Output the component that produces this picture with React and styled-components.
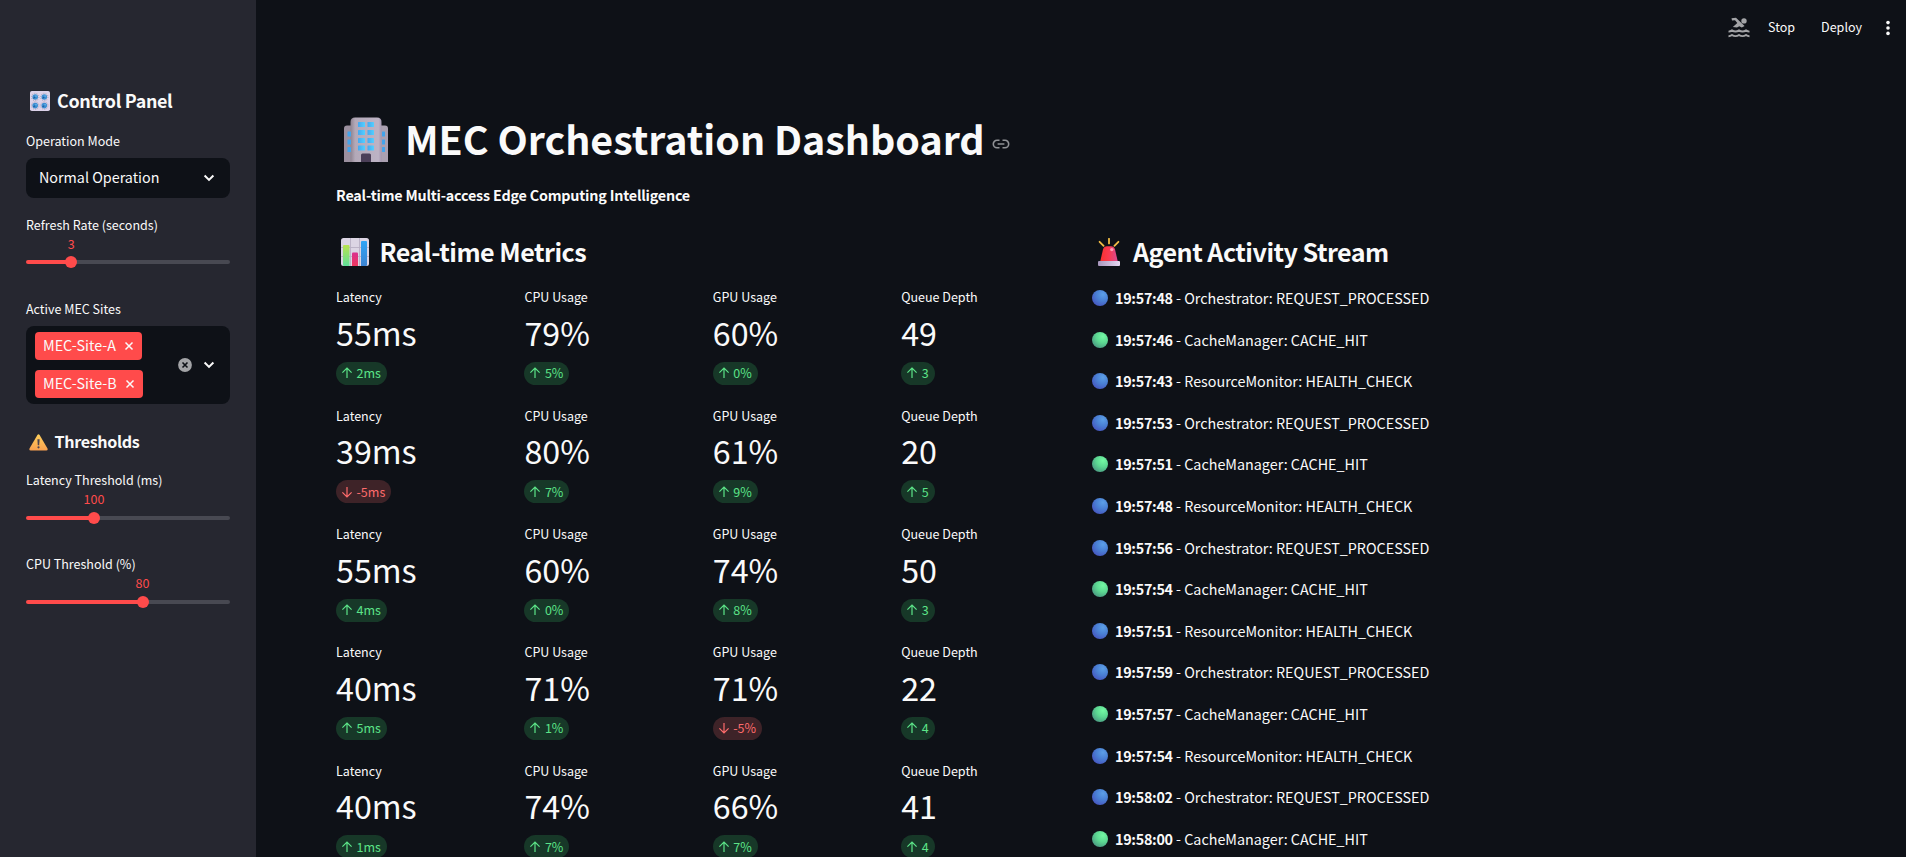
import React from "react";
import styled, { createGlobalStyle } from "styled-components";

const GlobalStyle = createGlobalStyle`
  *, *::before, *::after { box-sizing: border-box; }
  body {
    margin: 0;
    background: #0e1117;
    color: #fafafa;
    font-family: "Noto Sans CJK SC", "Noto Sans", sans-serif;
    font-size: 14.33px;
    overflow: hidden;
  }
  h1, h2, h3, p { margin: 0; }
`;

const Shell = styled.div`
  display: flex;
  height: 857px;
  overflow: hidden;
`;

/* ---------- sidebar ---------- */

const Sidebar = styled.aside`
  flex: 0 0 256px;
  padding: 86px 26px 0;
  background: #262730;
`;

const SideHeading = styled.h2`
  display: flex;
  align-items: center;
  height: 30px;
  gap: ${(p) => p.$gap}px;
  padding-left: ${(p) => p.$indent}px;
  padding-bottom: 2px;
  font-size: ${(p) => (p.$small ? 16.1 : 17.9)}px;
  font-weight: 600;
  line-height: 28px;
  letter-spacing: -0.33px;
  white-space: nowrap;
  svg { margin-top: 2px; }
`;

const Field = styled.div`
  display: flex;
  flex-direction: column;
  margin-top: ${(p) => p.$top}px;
`;

const FieldLabel = styled.label`
  height: 22px;
  font-size: 12.53px;
  line-height: ${(p) => (p.$raised ? 20 : 22)}px;
  white-space: nowrap;
`;

const SelectBox = styled.div`
  display: flex;
  align-items: center;
  justify-content: space-between;
  height: 40px;
  margin-top: 6px;
  padding: 0 13px 0 13.5px;
  border-radius: 8px;
  background: #0e1117;
`;

const SelectText = styled.span`
  margin: 0 0 2px -0.5px;
  line-height: 24px;
`;

const MultiBox = styled(SelectBox)`
  height: 78px;
  padding: 0 13px 0 9px;
`;

const TagList = styled.div`
  display: flex;
  flex-direction: column;
  align-items: flex-start;
  gap: 10px;
`;

const Tag = styled.span`
  display: flex;
  justify-content: space-between;
  width: ${(p) => p.$width}px;
  height: 28px;
  padding: 0 8px;
  border-radius: 4px;
  background: #ff4b4b;
  line-height: 26px;
  svg { margin-top: 9px; }
`;

const BoxActions = styled.div`
  display: flex;
  align-items: center;
  gap: 9px;
`;

const SliderValue = styled.div`
  width: 40px;
  height: 18px;
  margin-left: ${(p) => p.$at - 20}px;
  color: #ff4b4b;
  font-size: 12.53px;
  line-height: ${(p) => (p.$raised ? 14 : 16)}px;
  text-align: center;
`;

const SliderRail = styled.div`
  display: flex;
  align-items: center;
  height: 12px;
  margin-top: 2px;
`;

const RailFilled = styled.div`
  width: ${(p) => p.$at}px;
  height: 4px;
  border-radius: 2px 0 0 2px;
  background: #ff4b4b;
`;

const RailRest = styled.div`
  flex: 1;
  height: 4px;
  border-radius: 0 2px 2px 0;
  background: #484952;
`;

const Thumb = styled.div`
  flex: 0 0 12px;
  height: 12px;
  margin: 0 -6px;
  z-index: 1;
  border-radius: 50%;
  background: #ff4b4b;
`;

/* ---------- main ---------- */

const Main = styled.main`
  flex: 1;
  min-width: 0;
`;

const Toolbar = styled.header`
  display: flex;
  align-items: center;
  justify-content: flex-end;
  height: 60px;
  padding: 0 13px 4px 0;
`;

const ToolbarButton = styled.button`
  margin: 0 0 2px ${(p) => p.$left}px;
  padding: 0;
  border: 0;
  background: none;
  color: #fafafa;
  font-family: inherit;
  font-size: 12.53px;
  line-height: 22px;
`;

const ToolbarIcon = styled.span`
  display: flex;
  margin-left: ${(p) => p.$left || 0}px;
`;

const Content = styled.div`
  padding-left: 80px;
`;

const TitleRow = styled.div`
  display: flex;
  align-items: center;
  height: 60px;
  margin-top: 50px;
  padding-left: 7px;
`;

const Title = styled.h1`
  margin: 0 0 4px 16px;
  font-size: 39.4px;
  font-weight: 700;
  line-height: 56px;
  letter-spacing: -0.03px;
  white-space: nowrap;
`;

const LinkSlot = styled.span`
  display: flex;
  margin: 7px 0 0 7px;
`;

const Subtitle = styled.p`
  height: 26px;
  margin-top: 13px;
  font-weight: 700;
  line-height: 24px;
  letter-spacing: -0.195px;
`;

const Columns = styled.div`
  display: grid;
  grid-template-columns: 756px 1fr;
  margin-top: 26px;
`;

const SectionHeading = styled.h2`
  display: flex;
  align-items: center;
  gap: ${(p) => p.$gap}px;
  height: 36px;
  padding-left: ${(p) => p.$indent}px;
  padding-bottom: 4px;
  font-size: 25.07px;
  font-weight: 600;
  line-height: 32px;
  letter-spacing: -0.51px;
  white-space: nowrap;
  svg { margin-top: 2px; }
`;

const MetricGrid = styled.div`
  display: grid;
  grid-template-columns: repeat(4, 188.4px);
  grid-auto-rows: 118.3px;
  margin-top: 15.4px;
`;

const MetricLabel = styled.div`
  height: 21.6px;
  font-size: 12.53px;
  line-height: 22px;
`;

const MetricValue = styled.div`
  height: 54px;
  font-size: 32.23px;
  line-height: 49.6px;
`;

const Delta = styled.div`
  display: flex;
  align-items: center;
  width: fit-content;
  height: 23px;
  padding: 0 6px 1px 3px;
  border-radius: 12px;
  background: ${(p) => (p.$down ? "#3e2328" : "#173828")};
  color: ${(p) => (p.$down ? "#ff6c6c" : "#5ce488")};
  font-size: 12.53px;
  line-height: 21px;
  svg { margin: 1px 1.5px 0 0; }
`;

const Feed = styled.div`
  display: flex;
  flex-direction: column;
  margin-top: 15px;
`;

const FeedRow = styled.p`
  display: flex;
  height: 41.6px;
  line-height: 23.6px;
  white-space: pre;
  svg { margin: 4px 7px 0 0; }
`;

const FeedTime = styled.strong`
  letter-spacing: -0.28px;
`;

/* ---------- icons ---------- */

const KnobsIcon = () => (
  <svg width="20" height="20" viewBox="0 0 20 20">
    <rect width="20" height="20" rx="1.8" fill="#ddd3ea" />
    {[[5.2, 6], [14.3, 6], [5.2, 14.6], [14.3, 14.6]].map(([x, y]) => (
      <g key={`${x}-${y}`}>
        <circle cx={x} cy={y} r="3.7" fill="none" stroke="#a79db3" strokeWidth="1" strokeDasharray="1 1.3" />
        <circle cx={x} cy={y} r="2.8" fill="#3e8fd2" />
        <path d={`M${x} ${y}l-1.8 1.4`} stroke="#1d5c9e" strokeWidth="1.1" />
        <circle cx={x + 0.8} cy={y - 0.9} r="0.8" fill="#6db9ef" />
      </g>
    ))}
  </svg>
);

const WarningIcon = () => (
  <svg width="19" height="17" viewBox="0 0 19 17">
    <defs>
      <linearGradient id="warn" x1="0" y1="0" x2="0" y2="1">
        <stop offset="0" stopColor="#ffd05c" />
        <stop offset="1" stopColor="#f9a04f" />
      </linearGradient>
    </defs>
    <path d="M8.4 1.1Q9.5-.4 10.6 1.1L18.5 14.6Q19.1 16.4 17.3 16.5H1.7Q-.1 16.4.5 14.6Z" fill="url(#warn)" />
    <path d="M8.4 5.2h2.2l-.4 6H8.8Z" fill="#4d4450" />
    <circle cx="9.5" cy="13.3" r="1.1" fill="#4d4450" />
  </svg>
);

const BuildingIcon = () => (
  <svg width="46" height="46" viewBox="0 0 46 46">
    <defs>
      <linearGradient id="tower" x1="0" x2="1">
        <stop offset="0" stopColor="#8e8390" />
        <stop offset=".15" stopColor="#b3a9b8" />
        <stop offset=".9" stopColor="#bdb3c5" />
        <stop offset="1" stopColor="#a497b0" />
      </linearGradient>
      <linearGradient id="pane" x1="0" x2="1">
        <stop offset="0" stopColor="#45a8f0" />
        <stop offset="1" stopColor="#52d0ff" />
      </linearGradient>
    </defs>
    <path d="M1 45V11.5q0-3 3-3h5V45Z" fill="#9b909f" />
    <path d="M45 45V11.5q0-3-3-3h-5V45Z" fill="#aaa0b1" />
    <path d="M7.5 45V5q0-4.500 4.500-4.500h22q4.500 0 4.500 4.500v40Z" fill="url(#tower)" />
    {[5, 13, 21, 28.5].map((y) => (
      <g key={y} fill="url(#pane)">
        <rect x="15" y={y} width="7" height="5" rx=".6" />
        <rect x="24.5" y={y} width="6.5" height="5" rx=".6" />
      </g>
    ))}
    {[14.5, 22.5, 30].map((y) => (
      <g key={y} fill="#43a4ec">
        <rect x="4.5" y={y} width="3.5" height="5" rx=".5" />
        <rect x="39" y={y} width="3" height="5" rx=".5" />
      </g>
    ))}
    <path d="M18 45v-7q0-1.500 1.500-1.500h7q1.500 0 1.500 1.500v7Z" fill="#4b3f58" />
  </svg>
);

const ChartIcon = () => (
  <svg width="28" height="28" viewBox="0 0 28 28">
    <defs>
      <linearGradient id="barGreen" x1="0" y1="0" x2="0" y2="1">
        <stop offset="0" stopColor="#b9e24f" />
        <stop offset="1" stopColor="#5fe09a" />
      </linearGradient>
      <linearGradient id="barBlue" x1="0" y1="0" x2="0" y2="1">
        <stop offset="0" stopColor="#2fa4f5" />
        <stop offset="1" stopColor="#3d84d2" />
      </linearGradient>
      <linearGradient id="barPink" x1="0" y1="0" x2="0" y2="1">
        <stop offset="0" stopColor="#d9308f" />
        <stop offset="1" stopColor="#f0385f" />
      </linearGradient>
    </defs>
    <rect width="28" height="28" rx="2.5" fill="#dcd5e4" />
    <path d="M0 9.5h28M0 18.5h28M9.5 0v28M18.5 0v28" stroke="#b9b0c4" strokeWidth=".9" />
    <path d="M2 8q0-1 1-1h4.500q1 0 1 1v20H3q-1 0-1-1Z" fill="url(#barGreen)" />
    <path d="M11 15.5q0-1 1-1h4q1 0 1 1V28h-6Z" fill="url(#barPink)" />
    <path d="M20 4q0-1 1-1h4q1 0 1 1v23q0 1-1 1h-5Z" fill="url(#barBlue)" />
  </svg>
);

const SirenIcon = () => (
  <svg width="22" height="28" viewBox="0 0 22 28">
    <defs>
      <linearGradient id="lamp" x1="0" x2="1">
        <stop offset="0" stopColor="#f8312f" />
        <stop offset=".5" stopColor="#fb3a50" />
        <stop offset="1" stopColor="#d94a93" />
      </linearGradient>
      <linearGradient id="lampBase" x1="0" y1="0" x2="1" y2="0">
        <stop offset="0" stopColor="#a796bd" />
        <stop offset="1" stopColor="#e6d9f2" />
      </linearGradient>
    </defs>
    <path d="M11 .8v4.600M1.600 3.800l4 4M20.400 3.800l-4 4" stroke="#f2bd45" strokeWidth="1.8" strokeLinecap="round" />
    <path d="M2.200 23.500L5 11.500Q6 8.200 9 8.200h4q3 0 4 3.300l2.800 12Z" fill="url(#lamp)" />
    <circle cx="13.8" cy="11.6" r="1.7" fill="#ff9db4" />
    <rect x="0" y="23" width="22" height="5" rx="1" fill="url(#lampBase)" />
  </svg>
);

const DOT_STOPS = {
  blue: ["#5c9fe6", "#4a80d4", "#4656c0"],
  green: ["#74f8a4", "#5cd892", "#4a9a82"],
};

const Dot = ({ tone }) => (
  <svg width="16" height="16" viewBox="0 0 16 16">
    <defs>
      <radialGradient id={`dot-${tone}`} cx=".68" cy=".28" r=".8">
        <stop offset="0" stopColor={DOT_STOPS[tone][0]} />
        <stop offset=".5" stopColor={DOT_STOPS[tone][1]} />
        <stop offset="1" stopColor={DOT_STOPS[tone][2]} />
      </radialGradient>
    </defs>
    <circle cx="8" cy="8" r="8" fill={`url(#dot-${tone})`} />
  </svg>
);

const ChevronIcon = () => (
  <svg width="16" height="16" viewBox="0 0 16 16" fill="none" stroke="#fafafa" strokeWidth="2">
    <path d="M3.600 5.500L8 9.900l4.400-4.400" />
  </svg>
);

const CrossIcon = () => (
  <svg width="10" height="10" viewBox="0 0 10 10" fill="none" stroke="#fafafa" strokeWidth="1.5">
    <path d="M1.500 1.500l7 7M8.500 1.500l-7 7" />
  </svg>
);

const ClearIcon = () => (
  <svg width="14" height="14" viewBox="0 0 14 14">
    <circle cx="7" cy="7" r="6.9" fill="#a3a4a7" />
    <path d="M4.500 4.500l5 5M9.500 4.500l-5 5" stroke="#0e1117" strokeWidth="1.6" />
  </svg>
);

const LinkIcon = () => (
  <svg width="18" height="10" viewBox="0 0 18 10" fill="none" stroke="#8f9195" strokeWidth="1.6">
    <path d="M7.500 1.300H5a3.700 3.700 0 0 0 0 7.400h2.500M10.500 1.300H13a3.700 3.700 0 0 1 0 7.400h-2.500M5.600 5h6.800" />
  </svg>
);

const SwimIcon = () => (
  <svg width="22" height="22" viewBox="0 0 22 22" fill="#a3a4a7">
    <circle cx="16" cy="3.9" r="2.7" />
    <path d="M3.500 1.200L8 .700l8.600 8.300-2.800 1.500-2.500-1.200L9 10.500l-4.200-.6 4.500-4L7 3.300l-3 .3Z" />
    <path d="M.5 14.600q1.800 0 3.500-1.200 3.500 2.300 7 0 3.500 2.300 7 0 1.700 1.200 3.500 1.200M.5 19.200q1.800 0 3.500-1.200 3.500 2.300 7 0 3.500 2.300 7 0 1.700 1.200 3.500 1.200" fill="none" stroke="#a3a4a7" strokeWidth="1.9" />
  </svg>
);

const MenuDots = () => (
  <svg width="10" height="16" viewBox="0 0 10 16" fill="#fafafa">
    <circle cx="5" cy="2.6" r="1.8" />
    <circle cx="5" cy="8" r="1.8" />
    <circle cx="5" cy="13.4" r="1.8" />
  </svg>
);

const ArrowIcon = ({ down }) => (
  <svg width="16" height="16" viewBox="0 0 16 16" fill="none" stroke="currentColor" strokeWidth="1.2">
    {down ? <path d="M8 3v10M3.400 8.400L8 13l4.600-4.600" /> : <path d="M8 13V3M3.400 7.600L8 3l4.600 4.600" />}
  </svg>
);

/* ---------- data ---------- */

const METRIC_NAMES = ["Latency", "CPU Usage", "GPU Usage", "Queue Depth"];

const METRICS = [
  [["55ms", "2ms"], ["79%", "5%"], ["60%", "0%"], ["49", "3"]],
  [["39ms", "-5ms"], ["80%", "7%"], ["61%", "9%"], ["20", "5"]],
  [["55ms", "4ms"], ["60%", "0%"], ["74%", "8%"], ["50", "3"]],
  [["40ms", "5ms"], ["71%", "1%"], ["71%", "-5%"], ["22", "4"]],
  [["40ms", "1ms"], ["74%", "7%"], ["66%", "7%"], ["41", "4"]],
];

const AGENTS = [
  ["blue", "Orchestrator: REQUEST_PROCESSED"],
  ["green", "CacheManager: CACHE_HIT"],
  ["blue", "ResourceMonitor: HEALTH_CHECK"],
];

const TIMES = [
  "19:57:48", "19:57:46", "19:57:43", "19:57:53", "19:57:51", "19:57:48", "19:57:56",
  "19:57:54", "19:57:51", "19:57:59", "19:57:57", "19:57:54", "19:58:02", "19:58:00",
];

const Slider = ({ label, value, at, top, raised }) => (
  <Field $top={top}>
    <FieldLabel $raised={raised}>{label}</FieldLabel>
    <SliderValue $at={at} $raised={raised}>{value}</SliderValue>
    <SliderRail>
      <RailFilled $at={at} />
      <Thumb />
      <RailRest />
    </SliderRail>
  </Field>
);

export default function App() {
  return (
    <Shell>
      <GlobalStyle />
      <Sidebar>
        <SideHeading $gap={7} $indent={4}>
          <KnobsIcon />
          Control Panel
        </SideHeading>
        <Field $top={14}>
          <FieldLabel>Operation Mode</FieldLabel>
          <SelectBox>
            <SelectText>Normal Operation</SelectText>
            <ChevronIcon />
          </SelectBox>
        </Field>
        <Slider label="Refresh Rate (seconds)" value="3" at={45.3} top={16} />
        <Field $top={30}>
          <FieldLabel>Active MEC Sites</FieldLabel>
          <MultiBox>
            <TagList>
              <Tag $width={107}>MEC-Site-A<CrossIcon /></Tag>
              <Tag $width={108}>MEC-Site-B<CrossIcon /></Tag>
            </TagList>
            <BoxActions>
              <ClearIcon />
              <ChevronIcon />
            </BoxActions>
          </MultiBox>
        </Field>
        <Field $top={23}>
          <SideHeading $gap={6.5} $indent={3} $small>
            <WarningIcon />
            Thresholds
          </SideHeading>
        </Field>
        <Slider label="Latency Threshold (ms)" value="100" at={68} top={13} raised />
        <Slider label="CPU Threshold (%)" value="80" at={116.5} top={30} raised />
      </Sidebar>

      <Main>
        <Toolbar>
          <ToolbarIcon><SwimIcon /></ToolbarIcon>
          <ToolbarButton $left={18}>Stop</ToolbarButton>
          <ToolbarButton $left={26}>Deploy</ToolbarButton>
          <ToolbarIcon $left={21}><MenuDots /></ToolbarIcon>
        </Toolbar>
        <Content>
          <TitleRow>
            <BuildingIcon />
            <Title>MEC Orchestration Dashboard</Title>
            <LinkSlot><LinkIcon /></LinkSlot>
          </TitleRow>
          <Subtitle>Real-time Multi-access Edge Computing Intelligence</Subtitle>
          <Columns>
            <section>
              <SectionHeading $gap={10.5} $indent={5}>
                <ChartIcon />
                Real-time Metrics
              </SectionHeading>
              <MetricGrid>
                {METRICS.flatMap((row, r) =>
                  row.map(([value, delta], c) => {
                    const down = delta.startsWith("-");
                    return (
                      <div key={`${r}-${c}`}>
                        <MetricLabel>{METRIC_NAMES[c]}</MetricLabel>
                        <MetricValue>{value}</MetricValue>
                        <Delta $down={down}>
                          <ArrowIcon down={down} />
                          {delta}
                        </Delta>
                      </div>
                    );
                  })
                )}
              </MetricGrid>
            </section>
            <section>
              <SectionHeading $gap={13} $indent={6}>
                <SirenIcon />
                Agent Activity Stream
              </SectionHeading>
              <Feed>
                {TIMES.map((time, i) => {
                  const [tone, text] = AGENTS[i % 3];
                  return (
                    <FeedRow key={i}>
                      <Dot tone={tone} />
                      <FeedTime>{time}</FeedTime>
                      <span>{` - ${text}`}</span>
                    </FeedRow>
                  );
                })}
              </Feed>
            </section>
          </Columns>
        </Content>
      </Main>
    </Shell>
  );
}
